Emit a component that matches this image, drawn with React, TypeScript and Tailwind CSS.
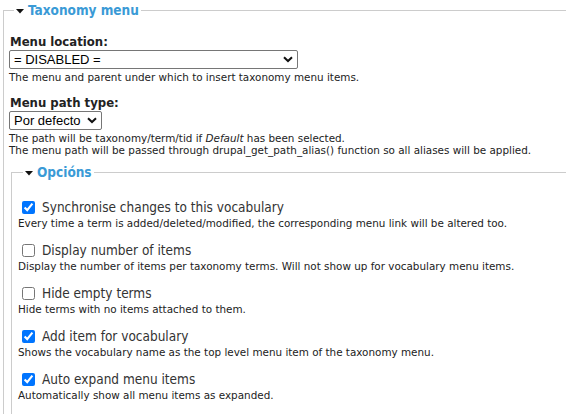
import React from 'react';

const head = { fontFamily: '"DejaVu Sans Condensed", "DejaVu Sans", sans-serif' };
const body = { fontFamily: '"DejaVu Sans", Verdana, sans-serif' };
const ctrl = { fontFamily: '"Liberation Sans", Arial, sans-serif' };

const Arrow = () => (
  <svg width="8" height="5" viewBox="0 0 8 5" className="mr-[4px] mt-[2px] shrink-0">
    <path d="M0 0 H8 L4 4.5 Z" fill="#111" />
  </svg>
);

const Chevron = () => (
  <svg width="10" height="7" viewBox="0 0 10 7">
    <path d="M1 1.2 L5 5 L9 1.2" fill="none" stroke="#111" strokeWidth="2" />
  </svg>
);

const Legend: React.FC<{ title: string }> = ({ title }) => (
  <legend className="ml-[5px] px-[2px]">
    <span className="flex items-center text-[13.5px] leading-[20px] font-bold text-[#3a9ad6]" style={head}>
      <Arrow />
      {title}
    </span>
  </legend>
);

const Select: React.FC<{ value: string; width: string }> = ({ value, width }) => (
  <div
    className={`flex items-center justify-between h-[19px] border border-[#767676] rounded-[2px] pl-[4px] pr-[4px] text-[13px] leading-[17px] text-black bg-white ${width}`}
    style={ctrl}
  >
    <span>{value}</span>
    <Chevron />
  </div>
);

const options = [
  {
    label: 'Synchronise changes to this vocabulary',
    desc: 'Every time a term is added/deleted/modified, the corresponding menu link will be altered too.',
    checked: true,
  },
  {
    label: 'Display number of items',
    desc: 'Display the number of items per taxonomy terms. Will not show up for vocabulary menu items.',
    checked: false,
  },
  {
    label: 'Hide empty terms',
    desc: 'Hide terms with no items attached to them.',
    checked: false,
  },
  {
    label: 'Add item for vocabulary',
    desc: 'Shows the vocabulary name as the top level menu item of the taxonomy menu.',
    checked: true,
  },
  {
    label: 'Auto expand menu items',
    desc: 'Automatically show all menu items as expanded.',
    checked: true,
  },
];

export default function App() {
  return (
    <div className="w-[566px] h-[414px] overflow-hidden bg-white text-[#222]" style={body}>
      <fieldset className="ml-[3px] w-[620px] h-[430px] border-l border-t border-[#cccccc] pl-[5px]">
        <Legend title="Taxonomy menu" />

        <div className="pt-[13px]">
          <div className="ml-[1px] text-[13px] leading-[17px] font-bold text-[#222]" style={head}>
            Menu location:
          </div>
          <Select value="= DISABLED =" width="w-[289px]" />
          <div className="text-[10.4px] leading-[12px] mt-[2px]">
            The menu and parent under which to insert taxonomy menu items.
          </div>
        </div>

        <div className="pt-[11px]">
          <div className="ml-[1px] text-[13px] leading-[17px] font-bold text-[#222]" style={head}>
            Menu path type:
          </div>
          <Select value="Por defecto" width="w-[93px]" />
          <div className="text-[10.4px] leading-[12px] mt-[2px]">
            The path will be taxonomy/term/tid if <em>Default</em> has been selected.
            <br />
            The menu path will be passed through drupal_get_path_alias() function so all aliases will be applied.
          </div>
        </div>

        <fieldset className="mt-[6px] ml-[2px] h-[300px] border-l border-t border-[#cccccc] pl-[6px]">
          <Legend title="Opcións" />
          <div className="pt-[17px] flex flex-col gap-[12px]">
            {options.map((o) => (
              <div key={o.label}>
                <label className="flex items-center gap-[7px] ml-[4px] text-[13.5px] leading-[17px] text-[#333]" style={head}>
                  <input type="checkbox" defaultChecked={o.checked} className="w-[13px] h-[13px] m-0" />
                  <span>{o.label}</span>
                </label>
                <div className="text-[10.4px] leading-[13px] mt-[1px]">{o.desc}</div>
              </div>
            ))}
          </div>
        </fieldset>
      </fieldset>
    </div>
  );
}
